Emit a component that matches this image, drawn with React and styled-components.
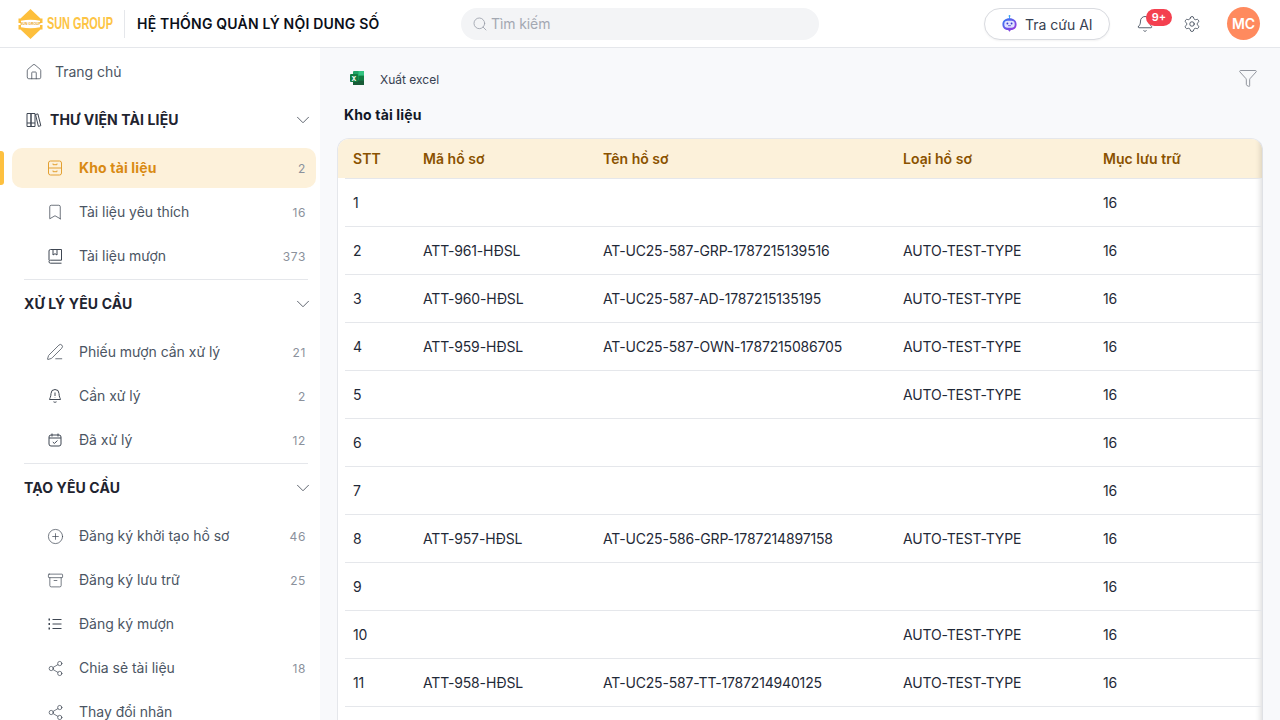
import React from 'react';
import styled, { createGlobalStyle } from 'styled-components';
import {
  Home, ChevronDown, Search, Bell, Settings, Funnel, Bookmark, PenLine,
  CirclePlus, Archive, Share2,
} from 'lucide-react';

const GlobalStyle = createGlobalStyle`
  html, body { margin: 0; height: 100%; overflow: hidden; }
  body { font-family: Inter, "Noto Sans", sans-serif; color: #111827; background: #fff; }
  * { box-sizing: border-box; }
`;

const Page = styled.div`
  width: 1280px;
  height: 720px;
  display: flex;
  flex-direction: column;
  overflow: hidden;
`;

const TopBar = styled.header`
  height: 48px;
  flex: none;
  display: flex;
  align-items: center;
  background: #fff;
  border-bottom: 1px solid #e5e7eb;
  padding: 0 20px 0 18px;
`;

const Brand = styled.div`
  width: 106px;
  display: flex;
  align-items: center;
  gap: 4px;
  flex: none;
`;

const BrandName = styled.span`
  display: inline-block;
  flex: none;
  width: 65px;
  font-family: "Liberation Sans", sans-serif;
  font-weight: 700;
  font-size: 17px;
  color: #fdc444;
  white-space: nowrap;
  transform: scaleX(0.64);
  transform-origin: left center;
`;

const BrandDivider = styled.div`
  width: 1px;
  height: 28px;
  background: #e5e7eb;
  flex: none;
`;

const SystemName = styled.h1`
  margin: 0 0 0 12px;
  width: 324px;
  flex: none;
  font-size: 14px;
  font-weight: 600;
  letter-spacing: 0.2px;
  line-height: 20px;
  color: #0b0f19;
  white-space: nowrap;
`;

const SearchBox = styled.div`
  width: 358px;
  height: 32px;
  flex: none;
  display: flex;
  align-items: center;
  gap: 3px;
  padding-left: 11px;
  border-radius: 16px;
  background: #f3f4f6;
  font-size: 14px;
  letter-spacing: -0.1px;
  color: #a3a8b2;
  svg { color: #9a9fa9; }
`;

const TopActions = styled.div`
  margin-left: auto;
  display: flex;
  align-items: center;
`;

const AiButton = styled.button`
  width: 126px;
  height: 32px;
  display: flex;
  align-items: center;
  gap: 7px;
  padding: 0 0 0 16px;
  border: 1px solid #d9dbe0;
  border-radius: 16px;
  background: #fff;
  box-shadow: 0 1px 2px rgba(0, 0, 0, 0.05);
  font-family: inherit;
  font-size: 14px;
  color: #374151;
  svg { flex: none; }
`;

const AiLabel = styled.span`
  padding-top: 2px;
`;

const BellWrap = styled.div`
  position: relative;
  width: 18px;
  height: 18px;
  margin-left: 26px;
  color: #374151;
`;

const Badge = styled.span`
  position: absolute;
  left: 10px;
  top: -6px;
  width: 26px;
  height: 17px;
  border-radius: 9px;
  background: #f4404f;
  color: #fff;
  font-size: 11px;
  font-weight: 600;
  line-height: 16px;
  text-align: center;
`;

const GearWrap = styled.div`
  margin-left: 29px;
  display: flex;
  color: #374151;
`;

const Avatar = styled.div`
  width: 33px;
  height: 33px;
  margin-left: 26px;
  border-radius: 50%;
  background: #ff8a5e;
  color: #fff;
  font-size: 14px;
  font-weight: 600;
  display: flex;
  align-items: center;
  justify-content: center;
`;

const Body = styled.div`
  flex: 1;
  min-height: 0;
  display: flex;
`;

const Sidebar = styled.aside`
  width: 320px;
  flex: none;
  background: #fff;
  padding-top: 4px;
  overflow: hidden;
`;

const NavRow = styled.div`
  position: relative;
  height: 40px;
  margin: 0 4px 4px 12px;
  padding: 0 10px 0 ${p => (p.$top ? '14px' : '35px')};
  display: flex;
  align-items: center;
  border-radius: 10px;
  background: ${p => (p.$active ? '#fdf1da' : 'transparent')};
  font-size: 14px;
  line-height: 20px;
  font-weight: ${p => (p.$active ? 700 : 400)};
  color: ${p => (p.$active ? '#d98a12' : '#4b5563')};
  svg { color: ${p => (p.$active ? '#e3a032' : '#3f4753')}; flex: none; }
`;

const NavIcon = styled.span`
  width: 16px;
  height: 16px;
  flex: none;
  display: flex;
  align-items: center;
  justify-content: center;
`;

const ActiveMark = styled.span`
  position: absolute;
  left: -12px;
  top: 3px;
  width: 4px;
  height: 34px;
  border-radius: 0 3px 3px 0;
  background: #fdc03f;
`;

const NavLabel = styled.span`
  margin-left: ${p => (p.$top ? '13px' : '16px')};
  letter-spacing: ${p => (p.$active ? '0.15px' : '-0.03px')};
  white-space: nowrap;
`;

const NavCount = styled.span`
  margin-left: auto;
  padding-top: 2px;
  font-size: 12px;
  font-weight: 400;
  letter-spacing: 0.6px;
  color: #8b919c;
`;

const SectionRow = styled.div`
  height: 40px;
  margin: ${p => (p.$first ? '8px' : '0')} 6px 8px 24px;
  padding-left: ${p => (p.$icon ? '2px' : '0')};
  display: flex;
  align-items: center;
  font-size: 14px;
  line-height: 20px;
  font-weight: 700;
  letter-spacing: 0.12px;
  color: #1f2430;
  svg { color: #3f4753; flex: none; }
`;

const SectionName = styled.span`
  margin-left: ${p => (p.$icon ? '8px' : '0')};
  white-space: nowrap;
`;

const SectionChevron = styled.span`
  margin-left: auto;
  display: flex;
`;

const Divider = styled.div`
  height: 1px;
  margin: -1px 12px 4px 24px;
  background: #e5e7eb;
`;

const Main = styled.main`
  flex: 1;
  min-width: 0;
  background: #f8f9fb;
  padding: 8px 17px 0 17px;
  overflow: hidden;
`;

const Toolbar = styled.div`
  height: 46px;
  display: flex;
  align-items: center;
  padding: 0 5px 0 12px;
  font-size: 12px;
  color: #374151;
  svg { margin-bottom: 2px; }
`;

const ExportLabel = styled.span`
  margin-left: 15px;
`;

const FilterIcon = styled.span`
  margin-left: auto;
  display: flex;
  color: #7d828c;
`;

const PageTitle = styled.h2`
  margin: 3px 0 13px 7px;
  font-size: 14px;
  font-weight: 700;
  letter-spacing: 0.15px;
  line-height: 20px;
  color: #111827;
`;

const TableCard = styled.div`
  height: 590px;
  border: 1px solid #e5e7eb;
  border-right: 1px solid #dfe1e5;
  border-radius: 12px 12px 0 0;
  background: #fff;
  box-shadow: inset -7px 0 6px -6px rgba(0, 0, 0, 0.16);
  overflow: hidden;
  font-size: 14px;
`;

const columns = '70px 180px 300px 200px 1fr';

const HeadRow = styled.div`
  height: 39px;
  padding-left: 15px;
  display: grid;
  grid-template-columns: ${columns};
  align-items: center;
  background: #fcf1da;
  box-shadow: inset -7px 0 6px -6px rgba(0, 0, 0, 0.16);
  font-weight: 600;
  letter-spacing: 0.03px;
  color: #8a5200;
`;

const RowList = styled.div`
  margin-left: 7px;
  border-bottom: 1px solid #e5e7eb;
`;

const BodyRow = styled.div`
  height: 48px;
  padding-left: 8px;
  display: grid;
  grid-template-columns: ${columns};
  align-items: center;
  border-top: 1px solid #e5e7eb;
  letter-spacing: -0.17px;
  color: #1f2937;
  white-space: nowrap;
`;

const DrawerIcon = () => (
  <svg width="16" height="16" viewBox="0 0 16 16" fill="none" stroke="currentColor" strokeWidth="1">
    <rect x="1.500" y="1" width="13" height="14" rx="2" />
    <path d="M1.500 8h13M6 3.500v1.200h4V3.500M6 10.500v1.200h4v-1.200" />
  </svg>
);

const LibraryIcon = () => (
  <svg width="16" height="16" viewBox="0 0 16 16" fill="none" stroke="currentColor" strokeWidth="1">
    <path d="M1 1.500h4v13H1zM5 1.500h4v13H5zM1 11h8M9.500 2.500l2.400-.6 2.900 11.800-2.400.7z" />
  </svg>
);

const BookIcon = () => (
  <svg width="16" height="16" viewBox="0 0 16 16" fill="none" stroke="currentColor" strokeWidth="1">
    <path d="M2 12.200V3a1.500 1.500 0 0 1 1.500-1.500h11v10.700h-11a1.500 1.500 0 0 0 0 3h11" />
    <path d="M6 2v5l2-1.300L10 7V2" />
  </svg>
);

const BellAlertIcon = () => (
  <svg width="16" height="16" viewBox="0 0 16 16" fill="none" stroke="currentColor" strokeWidth="1">
    <path d="M8 1.500a4 4 0 0 0-4 4c0 3.500-1.500 5-1.500 6h11c0-1-1.500-2.500-1.500-6a4 4 0 0 0-4-4zM6.500 13.800c.8.600 2.200.600 3 0M8 4.500v3.500M8 9.500v.4" />
  </svg>
);

const DoneIcon = () => (
  <svg width="16" height="16" viewBox="0 0 16 16" fill="none" stroke="currentColor" strokeWidth="1">
    <rect x="2" y="3" width="12" height="11" rx="2" />
    <path d="M5 1.500V4.500M11 1.500V4.500M2 6h12M5.800 10l1.600 1.500 3-3" />
  </svg>
);

const ListDotsIcon = () => (
  <svg width="16" height="16" viewBox="0 0 16 16" fill="none" stroke="currentColor" strokeWidth="1">
    <path d="M5.500 3.500h9M5.500 8h9M5.500 12.500h9" />
    <path d="M1.500 3.500h1.500M1.500 8h1.500M1.500 12.500h1.500" strokeWidth="2" />
  </svg>
);

const RobotIcon = () => (
  <svg width="17" height="19" viewBox="0 0 18 20">
    <defs>
      <linearGradient id="bot" x1="0" y1="0" x2="1" y2="1">
        <stop offset="0" stopColor="#2f7df6" />
        <stop offset="1" stopColor="#a62fd8" />
      </linearGradient>
    </defs>
    <circle cx="9" cy="2" r="1" fill="#38a3f5" />
    <rect x="8.500" y="2" width="1" height="3" fill="#38a3f5" />
    <path d="M9 4.500c4.400 0 7.500 2.600 7.500 6.500s-3.100 6-6 6l-1.500 1.800L7.500 17c-3-.2-6-2.100-6-6s3.100-6.500 7.500-6.500z" fill="url(#bot)" />
    <rect x="3.500" y="7" width="11" height="7.500" rx="3.500" fill="#dfe3ff" />
    <circle cx="6.800" cy="10" r="1" fill="#3b3bd1" />
    <circle cx="11.200" cy="10" r="1" fill="#3b3bd1" />
    <path d="M7.500 12.300h3" stroke="#3b3bd1" strokeWidth=".8" />
  </svg>
);

const ExcelIcon = () => (
  <svg width="16" height="16" viewBox="0 0 16 16">
    <rect x="4" y="1" width="11" height="14" rx="1" fill="#21a366" />
    <rect x="9.500" y="1" width="5.500" height="4.700" fill="#33c481" />
    <rect x="9.500" y="5.700" width="5.500" height="4.600" fill="#107c41" />
    <rect x="4" y="10.300" width="11" height="4.700" fill="#185c37" />
    <rect x="1" y="4" width="8" height="8" rx="1" fill="#107c41" />
    <text x="5" y="10.500" textAnchor="middle" fontSize="6.500" fontWeight="700" fill="#fff" fontFamily="Inter">X</text>
  </svg>
);

const LogoMark = () => (
  <svg width="25" height="30" viewBox="0 0 25 30" style={{ flex: 'none' }}>
    <path d="M12.500 0 22.500 9.500H24.500V14H.5V9.500H2.500z" fill="#fdbf3c" />
    <path d="M.5 16H24.500V20.500H22.500L12.500 30 2.500 20.500H.5z" fill="#fdbf3c" />
    <path d="M3 11.800Q12.500 9.500 22 11.800V18.200Q12.500 20.500 3 18.200z" fill="#fff" />
    <text x="12.500" y="16.200" textAnchor="middle" fontSize="3.400" fontWeight="700" fill="#e9a526" fontFamily="Liberation Sans">SUN GROUP</text>
  </svg>
);

const thin = { strokeWidth: 1 };

const sections = [
  {
    title: 'THƯ VIỆN TÀI LIỆU',
    leading: <LibraryIcon />,
    items: [
      { label: 'Kho tài liệu', count: 2, icon: <DrawerIcon />, active: true },
      { label: 'Tài liệu yêu thích', count: 16, icon: <Bookmark size={18} {...thin} /> },
      { label: 'Tài liệu mượn', count: 373, icon: <BookIcon /> },
    ],
  },
  {
    title: 'XỬ LÝ YÊU CẦU',
    items: [
      { label: 'Phiếu mượn cần xử lý', count: 21, icon: <PenLine size={18} {...thin} /> },
      { label: 'Cần xử lý', count: 2, icon: <BellAlertIcon /> },
      { label: 'Đã xử lý', count: 12, icon: <DoneIcon /> },
    ],
  },
  {
    title: 'TẠO YÊU CẦU',
    items: [
      { label: 'Đăng ký khởi tạo hồ sơ', count: 46, icon: <CirclePlus size={17} {...thin} /> },
      { label: 'Đăng ký lưu trữ', count: 25, icon: <Archive size={17} {...thin} /> },
      { label: 'Đăng ký mượn', icon: <ListDotsIcon /> },
      { label: 'Chia sẻ tài liệu', count: 18, icon: <Share2 size={17} {...thin} /> },
      { label: 'Thay đổi nhãn', icon: <Share2 size={17} {...thin} /> },
    ],
  },
];

const rows = [
  ['1', '', '', ''],
  ['2', 'ATT-961-HĐSL', 'AT-UC25-587-GRP-1787215139516', 'AUTO-TEST-TYPE'],
  ['3', 'ATT-960-HĐSL', 'AT-UC25-587-AD-1787215135195', 'AUTO-TEST-TYPE'],
  ['4', 'ATT-959-HĐSL', 'AT-UC25-587-OWN-1787215086705', 'AUTO-TEST-TYPE'],
  ['5', '', '', 'AUTO-TEST-TYPE'],
  ['6', '', '', ''],
  ['7', '', '', ''],
  ['8', 'ATT-957-HĐSL', 'AT-UC25-586-GRP-1787214897158', 'AUTO-TEST-TYPE'],
  ['9', '', '', ''],
  ['10', '', '', 'AUTO-TEST-TYPE'],
  ['11', 'ATT-958-HĐSL', 'AT-UC25-587-TT-1787214940125', 'AUTO-TEST-TYPE'],
];

export default function App() {
  return (
    <Page>
      <GlobalStyle />
      <TopBar>
        <Brand>
          <LogoMark />
          <BrandName>SUN GROUP</BrandName>
        </Brand>
        <BrandDivider />
        <SystemName>HỆ THỐNG QUẢN LÝ NỘI DUNG SỐ</SystemName>
        <SearchBox>
          <Search size={16} strokeWidth={1.25} />
          Tìm kiếm
        </SearchBox>
        <TopActions>
          <AiButton>
            <RobotIcon />
            <AiLabel>Tra cứu AI</AiLabel>
          </AiButton>
          <BellWrap>
            <Bell size={18} strokeWidth={1.1} />
            <Badge>9+</Badge>
          </BellWrap>
          <GearWrap>
            <Settings size={18} strokeWidth={1.1} />
          </GearWrap>
          <Avatar>MC</Avatar>
        </TopActions>
      </TopBar>
      <Body>
        <Sidebar>
          <NavRow $top>
            <NavIcon><Home size={18} {...thin} /></NavIcon>
            <NavLabel $top>Trang chủ</NavLabel>
          </NavRow>
          {sections.map((section, i) => (
            <React.Fragment key={section.title}>
              {i > 0 && <Divider />}
              <SectionRow $first={i === 0} $icon={!!section.leading}>
                {section.leading}
                <SectionName $icon={!!section.leading}>{section.title}</SectionName>
                <SectionChevron>
                  <ChevronDown size={22} strokeWidth={0.9} />
                </SectionChevron>
              </SectionRow>
              {section.items.map(item => (
                <NavRow key={item.label} $active={item.active}>
                  {item.active && <ActiveMark />}
                  <NavIcon>{item.icon}</NavIcon>
                  <NavLabel $active={item.active}>{item.label}</NavLabel>
                  {item.count !== undefined && <NavCount>{item.count}</NavCount>}
                </NavRow>
              ))}
            </React.Fragment>
          ))}
        </Sidebar>
        <Main>
          <Toolbar>
            <ExcelIcon />
            <ExportLabel>Xuất excel</ExportLabel>
            <FilterIcon>
              <Funnel size={20} strokeWidth={1} />
            </FilterIcon>
          </Toolbar>
          <PageTitle>Kho tài liệu</PageTitle>
          <TableCard>
            <HeadRow>
              <span>STT</span>
              <span>Mã hồ sơ</span>
              <span>Tên hồ sơ</span>
              <span>Loại hồ sơ</span>
              <span>Mục lưu trữ</span>
            </HeadRow>
            <RowList>
              {rows.map(r => (
                <BodyRow key={r[0]}>
                  <span>{r[0]}</span>
                  <span>{r[1]}</span>
                  <span>{r[2]}</span>
                  <span>{r[3]}</span>
                  <span>16</span>
                </BodyRow>
              ))}
            </RowList>
          </TableCard>
        </Main>
      </Body>
    </Page>
  );
}
